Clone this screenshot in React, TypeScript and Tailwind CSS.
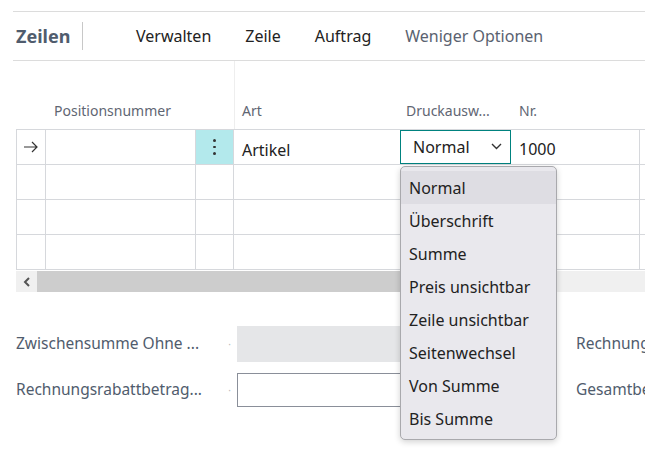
import React from 'react';

const font = { fontFamily: '"Segoe UI", "Noto Sans", "Open Sans", sans-serif' };

const options = [
  'Normal',
  'Überschrift',
  'Summe',
  'Preis unsichtbar',
  'Zeile unsichtbar',
  'Seitenwechsel',
  'Von Summe',
  'Bis Summe',
];

function Row({ first }: { first?: boolean }) {
  return (
    <div className="flex h-[35px] border-b border-[#d6d8dc]">
      <div className="w-[30px] shrink-0 border-l border-r border-[#d6d8dc] flex items-center justify-center">
        {first && (
          <svg width="16" height="12" viewBox="0 0 16 12" fill="none" stroke="#333" strokeWidth="1.2">
            <path d="M1 6h13M9 1l5 5-5 5" />
          </svg>
        )}
      </div>
      <div className="w-[150px] shrink-0 border-r border-[#d6d8dc]" />
      <div
        className={`w-[38px] shrink-0 border-r border-[#d6d8dc] flex items-center justify-center ${first ? 'bg-[#b3e9ec]' : ''}`}
      >
        {first && (
          <div className="flex flex-col gap-[4px]">
            <span className="block w-[2.5px] h-[2.5px] rounded-full bg-[#333]" />
            <span className="block w-[2.5px] h-[2.5px] rounded-full bg-[#333]" />
            <span className="block w-[2.5px] h-[2.5px] rounded-full bg-[#333]" />
          </div>
        )}
      </div>
      <div className="w-[166px] shrink-0 flex items-center pl-[8px] pt-[5px] text-[16px] text-[#222]">{first && 'Artikel'}</div>
      <div className="w-[119px] shrink-0 flex items-center">
        {first && (
          <div className="w-[111px] h-[34px] -mt-px border border-[#00827f] flex items-center justify-between pl-[12px] pr-[8px] text-[16px] text-[#222]">
            <span>Normal</span>
            <svg width="11" height="7" viewBox="0 0 11 7" fill="none" stroke="#333" strokeWidth="1.4">
              <path d="M1 1l4.5 4.5L10 1" />
            </svg>
          </div>
        )}
      </div>
      <div className="w-[121px] shrink-0 border-r border-[#d6d8dc] flex items-center text-[16px] text-[#222] pt-[4px]">
        {first && '1000'}
      </div>
      <div className="flex-1" />
    </div>
  );
}

export default function App() {
  return (
    <div className="relative w-[645px] h-[461px] bg-white overflow-hidden" style={font}>
      <div className="pt-[11px] pl-[13px]">
        <div className="h-[50px] border-t border-b border-[#dcdcdc] flex items-center">
          <div className="pl-[3px] text-[18px] font-bold text-[#505c6d] w-[69px]">Zeilen</div>
          <div className="w-px h-[28px] bg-[#c8c8c8]" />
          <div className="flex items-center text-[16px] text-[#222] ml-[53px] gap-[34px]">
            <span>Verwalten</span>
            <span>Zeile</span>
            <span>Auftrag</span>
            <span className="text-[#5a6270]">Weniger Optionen</span>
          </div>
        </div>
      </div>

      <div className="pl-[16px]">
        <div className="flex h-[69px] border-b border-[#d6d8dc] text-[14px] text-[#5f6673]">
          <div className="w-[218px] shrink-0 flex items-end pb-[8px] pl-[38px]">Positionsnummer</div>
          <div className="w-[166px] shrink-0 border-l border-[#eeeeee] flex items-end pb-[8px] pl-[7px]">Art</div>
          <div className="w-[119px] shrink-0 flex items-end pb-[8px] pl-[6px]">Druckausw...</div>
          <div className="flex-1 flex items-end pb-[8px]">Nr.</div>
        </div>
        <Row first />
        <Row />
        <Row />
        <Row />
        <div className="flex h-[21px] mt-px bg-[#f0f0f0]">
          <div className="w-[21px] flex items-center justify-center">
            <svg width="8" height="10" viewBox="0 0 8 10" fill="none" stroke="#555" strokeWidth="2">
              <path d="M6 1L2 5l4 4" />
            </svg>
          </div>
          <div className="w-[440px] bg-[#cdcdcd]" />
        </div>
      </div>

      <div className="pl-[16px] pt-[34px] flex flex-col gap-[11px] text-[15.5px] text-[#505c6d]">
        <div className="flex items-center h-[36px]">
          <div className="w-[206px] shrink-0 whitespace-nowrap overflow-hidden">Zwischensumme Ohne ...</div>
          <div className="w-[15px] shrink-0 flex justify-center text-[#bbb] text-[10px]">·</div>
          <div className="w-[300px] shrink-0 h-[36px] bg-[#e5e6e8]" />
          <div className="ml-[39px] shrink-0 whitespace-nowrap">Rechnungsrabatt</div>
        </div>
        <div className="flex items-center h-[34px]">
          <div className="w-[206px] shrink-0 whitespace-nowrap overflow-hidden">Rechnungsrabattbetrag...</div>
          <div className="w-[15px] shrink-0 flex justify-center text-[#bbb] text-[10px]">·</div>
          <div className="w-[300px] shrink-0 h-[34px] border border-[#8a8f99]" />
          <div className="ml-[39px] shrink-0 whitespace-nowrap">Gesamtbetrag</div>
        </div>
      </div>

      <div className="absolute left-[400px] top-[166px] w-[157px] bg-[#e9e8ed] border border-[#a9a9ad] rounded-[5px] shadow-[0_2px_6px_rgba(0,0,0,0.18)] py-[4px] text-[16px] text-[#222]">
        {options.map((o, i) => (
          <div
            key={o}
            className={`h-[33px] flex items-center pl-[8px] ${i === 0 ? 'bg-[#dedde3]' : ''}`}
          >
            {o}
          </div>
        ))}
      </div>
    </div>
  );
}
